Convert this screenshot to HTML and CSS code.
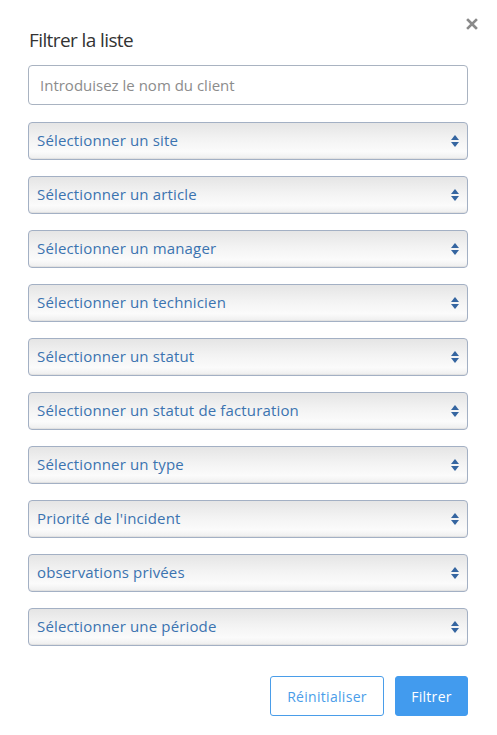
FILE: index.html
```html
<!DOCTYPE html>
<html lang="fr">
<head>
<meta charset="utf-8">
<title>Filtrer la liste</title>
<link rel="stylesheet" href="styles.css">
</head>
<body>
<div class="modal">
  <button class="close" type="button" aria-label="Fermer">
    <svg width="12" height="12" viewBox="0 0 12 12"><path d="M2 2L10 10M10 2L2 10" stroke="#8a8a8a" stroke-width="2.6" stroke-linecap="square"/></svg>
  </button>
  <h2 class="title">Filtrer la liste</h2>
  <input class="text-input" type="text" placeholder="Introduisez le nom du client">
  <div class="selects">
    <div class="select"><span>Sélectionner un site</span><i class="arrows"></i></div>
    <div class="select"><span>Sélectionner un article</span><i class="arrows"></i></div>
    <div class="select"><span>Sélectionner un manager</span><i class="arrows"></i></div>
    <div class="select"><span>Sélectionner un technicien</span><i class="arrows"></i></div>
    <div class="select"><span>Sélectionner un statut</span><i class="arrows"></i></div>
    <div class="select"><span>Sélectionner un statut de facturation</span><i class="arrows"></i></div>
    <div class="select"><span>Sélectionner un type</span><i class="arrows"></i></div>
    <div class="select"><span>Priorité de l'incident</span><i class="arrows"></i></div>
    <div class="select"><span>observations privées</span><i class="arrows"></i></div>
    <div class="select"><span>Sélectionner une période</span><i class="arrows"></i></div>
  </div>
  <div class="actions">
    <button class="btn btn-outline" type="button">Réinitialiser</button>
    <button class="btn btn-primary" type="button">Filtrer</button>
  </div>
</div>
</body>
</html>
```
FILE: styles.css
```css
* { box-sizing: border-box; }
html, body { margin: 0; padding: 0; background: #fff; }
body { font-family: "Open Sans", "Liberation Sans", sans-serif; }
.modal {
  position: relative;
  width: 497px;
  padding: 27px 29px 0 28px;
}
.close {
  position: absolute;
  top: 17px;
  left: 465px;
  width: 14px;
  height: 14px;
  padding: 0;
  border: 0;
  background: none;
  display: flex;
  align-items: center;
  justify-content: center;
}
.title {
  margin: 0 0 12px 1px;
  font-size: 19px;
  font-weight: 400;
  line-height: 26px;
  color: #333;
  letter-spacing: -0.6px;
}
.text-input {
  display: block;
  width: 440px;
  height: 40px;
  border: 1px solid #a9b3c1;
  border-radius: 4px;
  padding: 0 11px;
  font-family: inherit;
  font-size: 15px;
  color: #555;
  outline: none;
}
.text-input::placeholder { color: #8c8c8c; }
.selects {
  display: flex;
  flex-direction: column;
  gap: 16px;
  margin-top: 17px;
}
.select {
  width: 440px;
  height: 38px;
  border: 1px solid #a3b0c4;
  border-radius: 4px;
  background: linear-gradient(#e5e5e5 0%, #f3f3f3 45%, #fbfbfb 80%, #eeeeee 100%);
  box-shadow: inset 0 -1px 1px rgba(0,0,0,0.06);
  display: flex;
  align-items: center;
  justify-content: space-between;
  padding: 0 8px 2px 8px;
  font-size: 15px;
  color: #3b73b0;
}
.select span { letter-spacing: 0.15px; }
.arrows {
  position: relative;
  width: 8px;
  height: 14px;
  margin-top: 2px;
}
.arrows::before, .arrows::after {
  content: "";
  position: absolute;
  left: 0;
  border-left: 4px solid transparent;
  border-right: 4px solid transparent;
}
.arrows::before { top: 1px; border-bottom: 5px solid #3565a0; }
.arrows::after { bottom: 1px; border-top: 5px solid #3565a0; }
.actions {
  display: flex;
  justify-content: flex-end;
  gap: 11px;
  margin-top: 30px;
}
.btn {
  height: 40px;
  border-radius: 3px;
  font-family: inherit;
  font-size: 14px;
  letter-spacing: 0.3px;
  padding: 0;
}
.btn-outline {
  width: 114px;
  border: 1px solid #4a9de9;
  background: #fff;
  color: #4a9de9;
}
.btn-primary {
  width: 73px;
  border: 1px solid #429bee;
  background: #429bee;
  color: #fff;
}
```
